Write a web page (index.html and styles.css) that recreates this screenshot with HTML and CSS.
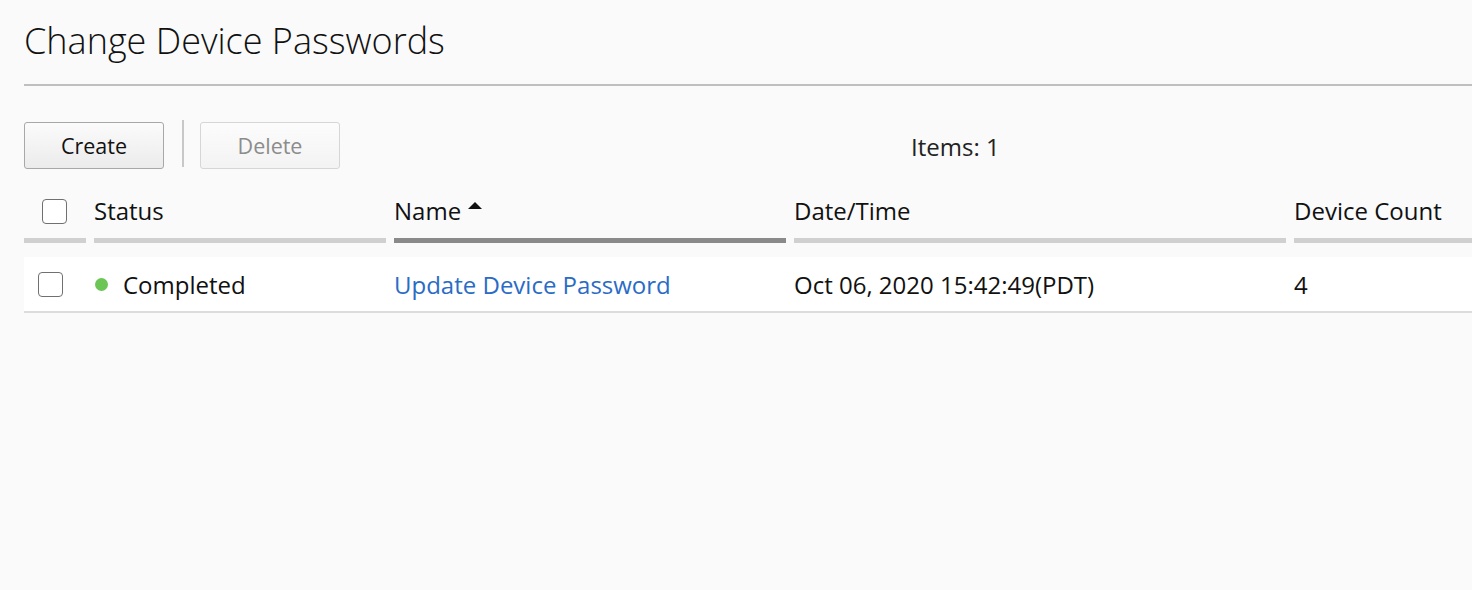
FILE: index.html
```html
<!DOCTYPE html>
<html>
<head>
<meta charset="utf-8">
<link rel="stylesheet" href="styles.css">
</head>
<body>
<div class="page">
  <h1 class="title">Change Device Passwords</h1>
  <div class="toolbar">
    <button class="btn">Create</button>
    <span class="sep"></span>
    <button class="btn btn-disabled">Delete</button>
    <span class="items">Items: 1</span>
  </div>
  <div class="table">
    <div class="thead">
      <div class="th th-check"><span class="cb"></span></div>
      <div class="th"><span class="th-label">Status</span></div>
      <div class="th th-sorted"><span class="th-label">Name<span class="sort-up"></span></span></div>
      <div class="th"><span class="th-label">Date/Time</span></div>
      <div class="th th-last"><span class="th-label">Device Count</span></div>
    </div>
    <div class="tr">
      <div class="td td-check"><span class="cb"></span></div>
      <div class="td"><span class="dot"></span><span class="cell-text">Completed</span></div>
      <div class="td"><a class="link cell-text" href="#">Update Device Password</a></div>
      <div class="td"><span class="cell-text">Oct 06, 2020 15:42:49(PDT)</span></div>
      <div class="td"><span class="cell-text">4</span></div>
    </div>
  </div>
</div>
</body>
</html>
```
FILE: styles.css
```css
html, body {
  margin: 0;
  padding: 0;
  background: #fafafa;
  font-family: "Open Sans", "Liberation Sans", sans-serif;
  color: #111;
}
.page {
  padding-left: 24px;
  overflow: hidden;
  height: 590px;
}
.title {
  margin: 0;
  font-weight: 300;
  font-size: 36px;
  line-height: 40px;
  padding-top: 21px;
  border-bottom: 2px solid #bfbfbf;
  color: #111;
  white-space: nowrap;
  box-sizing: border-box;
  height: 86px;
}
.toolbar {
  display: flex;
  align-items: center;
  margin-top: 36px;
  height: 47px;
}
.btn {
  font-family: "Open Sans", "Liberation Sans", sans-serif;
  width: 140px;
  height: 47px;
  font-size: 21.5px;
  color: #111;
  border: 1px solid #a8a8a8;
  border-radius: 3px;
  background: linear-gradient(#fbfbfb, #ebebeb);
  padding: 0;
}
.btn-disabled {
  color: #8c8c8c;
  border-color: #d6d6d6;
  background: linear-gradient(#fcfcfc, #f3f3f3);
}
.sep {
  width: 2px;
  height: 47px;
  background: #c8c8c8;
  margin: -4px 16px 0 18px;
}
.items {
  margin-left: 571px;
  font-size: 24px;
  color: #222;
  padding-top: 2px;
}
.table {
  margin-top: 20px;
}
.thead, .tr {
  display: grid;
  grid-template-columns: 70px 300px 400px 500px 1fr;
}
.th {
  display: flex;
  flex-direction: column;
  justify-content: flex-start;
  margin-right: 8px;
  border-bottom: 5px solid #d0d0d0;
  box-sizing: border-box;
  height: 54px;
}
.th-last { margin-right: 0; }
.th-sorted { border-bottom-color: #8a8a8a; }
.th-label {
  font-size: 24px;
  line-height: 30px;
  padding-top: 7px;
  white-space: nowrap;
  display: flex;
  align-items: center;
}
.th-check { padding-left: 18px; padding-top: 10px; }
.cb {
  display: block;
  width: 23px;
  height: 23px;
  border: 1.5px solid #707070;
  border-radius: 4px;
  background: #fff;
}
.sort-up {
  display: inline-block;
  width: 0;
  height: 0;
  border-left: 7px solid transparent;
  border-right: 7px solid transparent;
  border-bottom: 7px solid #111;
  margin-left: 7px;
  margin-top: -12px;
}
.tr {
  margin-top: 14px;
  background: #fff;
  height: 56px;
  border-bottom: 2px solid #dcdcdc;
  box-sizing: border-box;
}
.td {
  display: flex;
  align-items: center;
  white-space: nowrap;
}
.td-check { padding-left: 14px; }
.cell-text {
  font-size: 24px;
  display: inline-block;
}
.dot {
  width: 13px;
  height: 13px;
  border-radius: 50%;
  background: #6cc655;
  margin: 0 15px 0 1px;
}
.link {
  color: #2a6bc6;
  text-decoration: none;
}
```
